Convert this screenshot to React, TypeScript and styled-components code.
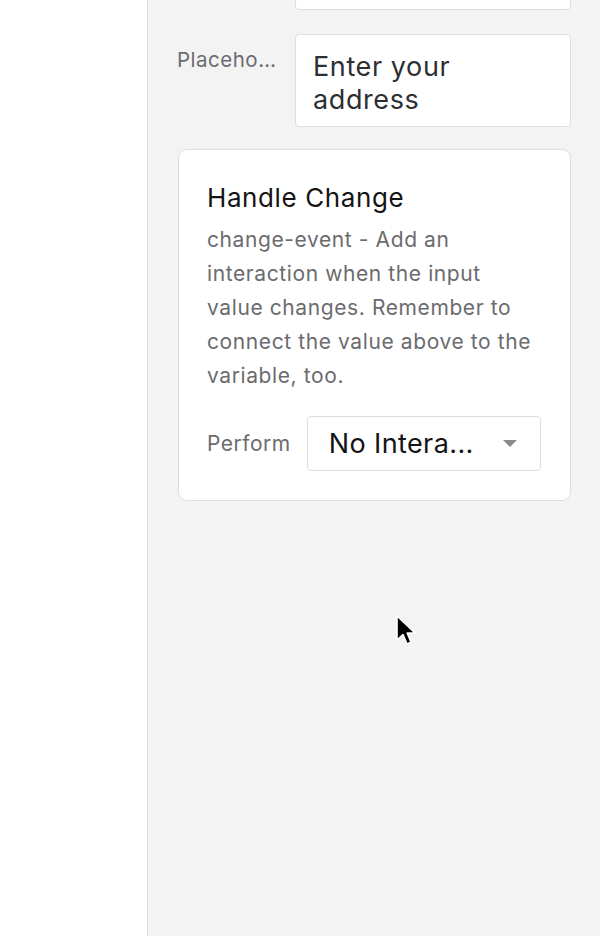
import React from "react";
import styled, { createGlobalStyle } from "styled-components";

const Global = createGlobalStyle`
  html, body { margin: 0; padding: 0; }
  body { font-family: Inter, "Open Sans", sans-serif; -webkit-font-smoothing: antialiased; }
  #root { height: 936px; }
`;

const Page = styled.div`
  display: flex;
  height: 936px;
  width: 600px;
  overflow: hidden;
  position: relative;
`;

const Canvas = styled.div`
  width: 147px;
  flex: none;
  background: #ffffff;
  border-right: 1px solid #dddddf;
`;

const Panel = styled.div`
  flex: 1;
  background: #f3f3f4;
  overflow: hidden;
`;

const Scroll = styled.div`
  display: flex;
  flex-direction: column;
  gap: 24px;
  padding: 0 29px 0 29px;
  margin-top: -50px;
`;

const FieldRow = styled.div`
  display: flex;
  align-items: flex-start;
`;

const Label = styled.div`
  width: 118px;
  flex: none;
  font-size: 20.5px;
  letter-spacing: 0.5px;
  line-height: 26px;
  color: #6b6b6e;
  padding-top: 13px;
  white-space: nowrap;
  overflow: hidden;
  text-overflow: ellipsis;
  padding-right: 16px;
  box-sizing: border-box;
`;

const Input = styled.div<{ $h?: number }>`
  flex: 1;
  box-sizing: border-box;
  min-height: ${(p) => p.$h ?? 0}px;
  background: #fff;
  border: 1px solid #dfdfe1;
  border-radius: 4px;
  padding: 15px 17px 10px;
  font-size: 27px;
  letter-spacing: 0.6px;
  line-height: 33px;
  color: #2c2f33;
`;

const Card = styled.div`
  margin-left: 1px;
  margin-top: -2px;
  background: #fff;
  border: 1px solid #dedee0;
  border-radius: 9px;
  padding: 32px 29px 29px 28px;
  display: flex;
  flex-direction: column;
`;

const Title = styled.div`
  font-size: 26px;
  letter-spacing: 0.6px;
  line-height: 32px;
  color: #141414;
`;

const Desc = styled.div`
  margin-top: 9px;
  margin-right: 3px;
  font-size: 21px;
  letter-spacing: 0.6px;
  line-height: 34px;
  color: #6b6b6e;
`;

const PerformRow = styled.div`
  margin-top: 23px;
  display: flex;
  align-items: center;
  gap: 16px;
`;

const PerformLabel = styled.div`
  font-size: 21px;
  letter-spacing: 0.5px;
  color: #6b6b6e;
`;

const Select = styled.div`
  flex: 1;
  height: 55px;
  box-sizing: border-box;
  border: 1px solid #dcdcde;
  border-radius: 4px;
  display: flex;
  align-items: center;
  padding: 0 23px 0 21px;
  font-size: 27px;
  letter-spacing: 0.4px;
  color: #141414;
`;

const SelectText = styled.span`
  flex: 1;
`;

const Caret = styled.span`
  width: 0;
  height: 0;
  border-left: 7px solid transparent;
  border-right: 7px solid transparent;
  border-top: 7px solid #8a8a8d;
`;

const Cursor = styled.svg`
  position: absolute;
  left: 394px;
  top: 614px;
`;

export default function App() {
  return (
    <>
      <Global />
      <Page>
        <Canvas />
        <Panel>
          <Scroll>
            <FieldRow>
              <Label>Value</Label>
              <Input $h={60} />
            </FieldRow>
            <FieldRow>
              <Label>Placeholder</Label>
              <Input>Enter your address</Input>
            </FieldRow>
            <Card>
              <Title>Handle Change</Title>
              <Desc>
                change-event - Add an interaction when the input value changes.
                Remember to connect the value above to the variable, too.
              </Desc>
              <PerformRow>
                <PerformLabel>Perform</PerformLabel>
                <Select>
                  <SelectText>No Intera...</SelectText>
                  <Caret />
                </Select>
              </PerformRow>
            </Card>
          </Scroll>
        </Panel>
        <Cursor width="24" height="34" viewBox="0 0 24 34">
          <path
            d="M3 2 L3 26 L9 20.5 L13 30 L17 28.3 L13.2 19 L21 19 Z"
            fill="#000"
            stroke="#fff"
            strokeWidth="1.6"
            strokeLinejoin="round"
          />
        </Cursor>
      </Page>
    </>
  );
}
